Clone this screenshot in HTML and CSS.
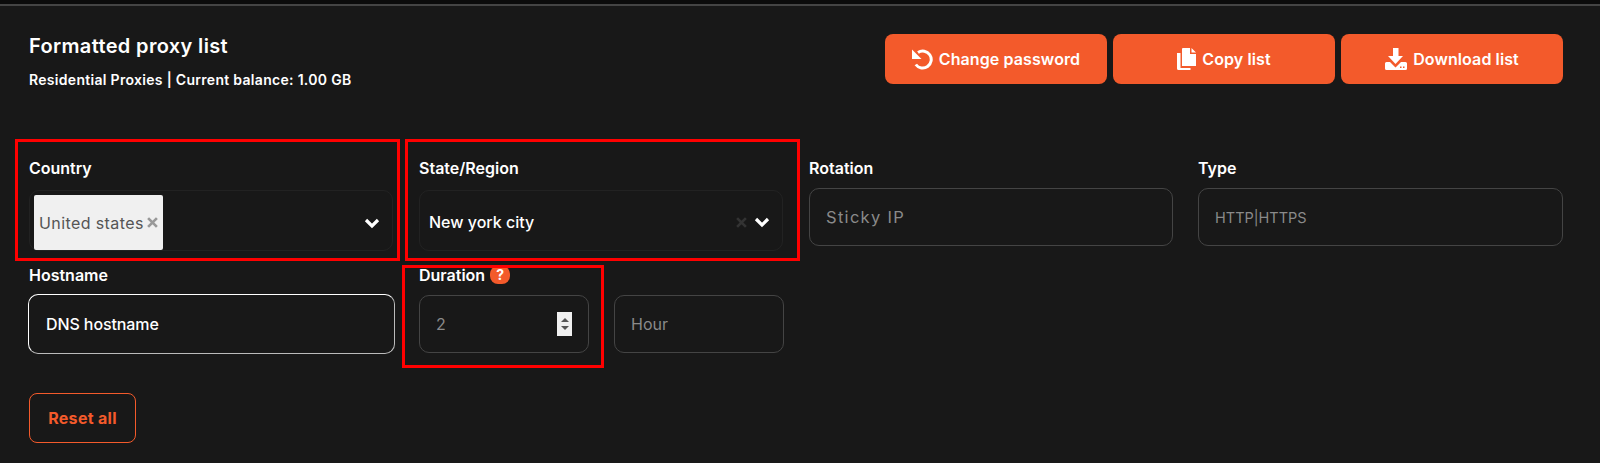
FILE: index.html
```html
<!DOCTYPE html>
<html lang="en">
<head>
<meta charset="utf-8">
<title>Formatted proxy list</title>
<link rel="stylesheet" href="styles.css">
</head>
<body>
<main class="panel">
  <header class="head">
    <div class="head-text">
      <h1 class="title">Formatted proxy list</h1>
      <p class="sub">Residential Proxies | Current balance: 1.00 GB</p>
    </div>
    <div class="actions">
      <button class="btn"><svg class="ico" viewBox="0 0 21 21"><path d="M6 3.500A8.500 8.500 0 1 1 3.800 15.500" fill="none" stroke="#fff" stroke-width="3"/><path d="M0 0.500V10H9.500z" fill="#fff"/></svg>Change password</button>
      <button class="btn"><svg class="ico ico-copy" viewBox="0 0 19 22"><path d="M6 0h7v6h6v12H5V1a1 1 0 0 1 1-1zM14.500 0L19 4.500h-4.500zM0 5h3.500v15h10v2H1.500A1.500 1.500 0 0 1 0 20.500z" fill="#fff"/></svg>Copy list</button>
      <button class="btn"><svg class="ico ico-dl" viewBox="0 0 22 22"><path d="M8 0h5.500v8H18l-7.500 8-7.500-8h5zM0 15.500A1.500 1.500 0 0 1 1.500 14H5l5.500 5.500L16 14h4.500a1.500 1.500 0 0 1 1.500 1.500V20.500a1.500 1.500 0 0 1-1.500 1.500H1.500A1.500 1.500 0 0 1 0 20.500z" fill="#fff"/><path d="M15 18.500h1.500V20H15zM18 18.500h1.500V20H18z" fill="#f35a2b"/></svg>Download list</button>
    </div>
  </header>

  <section class="grid">
    <div class="field">
      <label class="label">Country</label>
      <div class="select">
        <span class="tag">United states<svg class="tag-x" viewBox="0 0 10 10"><path d="M1 1l8 8M9 1l-8 8" stroke="#999" stroke-width="2.400"/></svg></span>
        <svg class="chev" viewBox="0 0 16 12"><path d="M2 3l6 6 6-6" fill="none" stroke="#fff" stroke-width="3.200"/></svg>
      </div>
    </div>
    <div class="field">
      <label class="label">State/Region</label>
      <div class="select select-state">
        <span class="value">New york city</span>
        <svg class="clear" viewBox="0 0 10 10"><path d="M1 1l8 8M9 1l-8 8" stroke="#333" stroke-width="2.400"/></svg>
        <svg class="chev" viewBox="0 0 16 12"><path d="M2 3l6 6 6-6" fill="none" stroke="#fff" stroke-width="3.200"/></svg>
      </div>
    </div>
    <div class="field">
      <label class="label">Rotation</label>
      <div class="input input-static input-sticky">Sticky IP</div>
    </div>
    <div class="field field-type">
      <label class="label">Type</label>
      <div class="input input-static input-type">HTTP|HTTPS</div>
    </div>

    <div class="field field-low">
      <label class="label">Hostname</label>
      <div class="input input-active">DNS hostname</div>
    </div>
    <div class="field field-low">
      <label class="label label-flex">Duration <span class="help">?</span></label>
      <div class="pair">
        <div class="input input-num">2
          <span class="spin"><i class="up"></i><i class="down"></i></span>
        </div>
        <div class="input">Hour</div>
      </div>
    </div>
  </section>

  <button class="reset">Reset all</button>

  <div class="mark mark-country"></div>
  <div class="mark mark-state"></div>
  <div class="mark mark-duration"></div>
</main>
</body>
</html>
```
FILE: styles.css
```css
* { box-sizing: border-box; }
html, body { margin: 0; height: 463px; overflow: hidden; background: #181818; }
body {
  font-family: Inter, "Liberation Sans", sans-serif;
  color: #fff;
  border-top: 4px solid #0b0b0b;
}
.panel {
  position: relative;
  height: 459px;
  padding: 28px 37px 0 29px;
  border-top: 2px solid #444;
}
.head { display: flex; justify-content: space-between; align-items: flex-start; height: 50px; }
.title { margin: 0; font-size: 20px; line-height: 24px; font-weight: 600; letter-spacing: 0.35px; }
.sub { margin: 13px 0 0; font-size: 14px; line-height: 18px; font-weight: 600; letter-spacing: 0.3px; }
.actions { display: flex; gap: 6px; }
.btn {
  width: 222px; height: 50px;
  display: flex; align-items: center; justify-content: center; gap: 6px;
  background: #f35a2b; color: #fff; border: 0; border-radius: 8px;
  font: 600 16px Inter, "Liberation Sans", sans-serif;
  letter-spacing: 0.1px;
}
.ico { width: 21px; height: 21px; flex: none; }
.ico-copy { width: 19px; height: 22px; }
.ico-dl { width: 22px; height: 22px; }
.grid {
  display: grid;
  grid-template-columns: repeat(4, 364px);
  column-gap: 26px;
  margin-top: 73px;
}
.field { min-width: 0; }
.field-low { margin-top: 13px; }
.field-type { margin-left: -1px; }
.label { display: block; height: 22px; font-size: 16px; line-height: 22px; font-weight: 600; }
.label-flex { display: flex; align-items: center; gap: 5px; }
.select {
  display: flex; align-items: center;
  height: 61px; margin-top: 11px; padding: 4px 12px 0 4px;
  border: 1px solid #222; border-radius: 10px;
}
.select-state { padding: 3px 12px 0 9px; }
.tag {
  display: flex; align-items: center; justify-content: space-between;
  width: 129px; height: 55px; padding: 0 5px;
  background: #f0f0f0; color: #555; border-radius: 2px;
  font-size: 16px; letter-spacing: 0.4px;
}
.tag-x { width: 11px; height: 11px; flex: none; }
.value { flex: 1; font-size: 16px; font-weight: 500; }
.chev { width: 16px; height: 12px; margin-left: auto; }
.select-state .chev { margin-left: 0; }
.clear { width: 11px; height: 11px; margin-right: 7px; }
.input {
  display: flex; align-items: center;
  height: 58px; margin-top: 9px; padding: 0 16px;
  border: 1px solid #444; border-radius: 10px;
  color: #8a8a8a; font-size: 16px;
}
.input-sticky { font-size: 16.500px; letter-spacing: 1.300px; }
.input-type { font-size: 14.500px; }
.input-active {
  margin: 8px 0 0 -1px; width: 367px; height: 60px; padding: 0 17px;
  border-color: #fff #bbb #bbb #fff;
  color: #fff; font-weight: 500; letter-spacing: -0.1px;
}
.pair { display: flex; gap: 25px; margin-right: -1px; }
.pair .input { flex: 1; }
.input-num { justify-content: space-between; padding-right: 16px; }
.spin {
  display: flex; flex-direction: column; justify-content: center; gap: 4px; align-items: center;
  width: 15px; height: 24px; background: #f0f0f0;
}
.spin i { width: 0; height: 0; border: 4px solid transparent; }
.spin .up { border-top: 0; border-bottom: 4px solid #555; }
.spin .down { border-bottom: 0; border-top: 4px solid #555; }
.help {
  display: block; width: 20px; height: 18px;
  background: #f35a2b; border-radius: 8px;
  text-align: center; line-height: 18px; font-weight: 700; font-size: 14px;
}
.reset {
  display: block; width: 107px; height: 50px; margin-top: 39px;
  background: transparent; border: 1px solid #f35a2b; border-radius: 8px;
  color: #f35a2b; font: 700 16px Inter, "Liberation Sans", sans-serif;
  letter-spacing: 0.3px;
}
.mark { position: absolute; border: 3px solid #f00; }
.mark-country { left: 15px; top: 133px; width: 385px; height: 122px; }
.mark-state { left: 405px; top: 133px; width: 395px; height: 122px; }
.mark-duration { left: 402px; top: 259px; width: 202px; height: 103px; }
```
